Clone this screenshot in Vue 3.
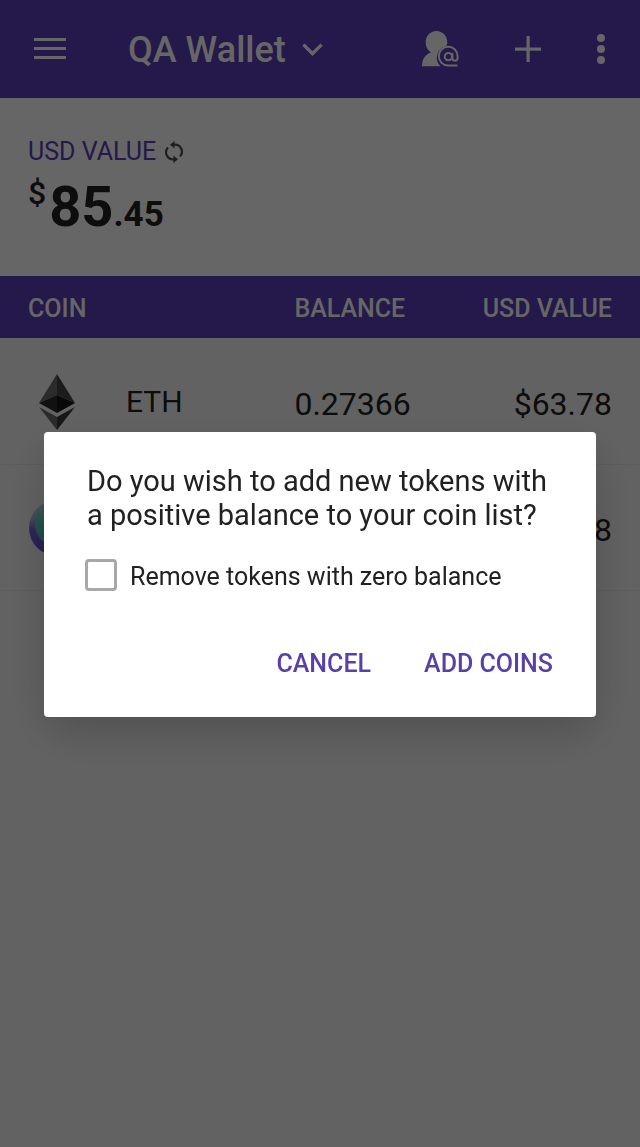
<template>
  <div class="wallet">
    <header class="topbar">
      <button class="icon-btn menu" type="button" aria-label="Menu">
        <svg width="32" height="22" viewBox="0 0 32 22" fill="currentColor">
          <rect y="0" width="32" height="3" />
          <rect y="9" width="32" height="3" />
          <rect y="18" width="32" height="3" />
        </svg>
      </button>
      <button class="icon-btn wallet-name" type="button">
        QA Wallet
        <svg width="21" height="14" viewBox="0 0 21 14" fill="none" stroke="currentColor" stroke-width="3.4">
          <path d="M1.4 1.6 10.500 10.700 19.600 1.600" />
        </svg>
      </button>
      <div class="actions">
        <button class="icon-btn" type="button" aria-label="Contacts">
          <svg width="38" height="38" viewBox="0 0 38 38" fill="none">
            <path fill="currentColor" d="M15.500 1C9.300 1 4.600 6 4.600 12.200c0 4.400 1.800 7.600 5.400 10.200C4.200 24.200 1 29 1 36.200h18.500A11.800 11.800 0 0 1 25 16.200C26 14.800 26.300 13.500 26.300 12.200 26.300 6 21.600 1 15.500 1z" />
            <g stroke="currentColor" stroke-width="2">
              <path d="M36.500 35.600h-9.300a9.400 9.400 0 1 1 9.400-9.400v1.800c0 3.600-5.200 3.600-5.200 0v-5" />
              <circle cx="27.400" cy="26.600" r="3.700" />
            </g>
          </svg>
        </button>
        <button class="icon-btn" type="button" aria-label="Add coin">
          <svg width="26" height="26" viewBox="0 0 26 26" fill="currentColor">
            <rect x="11.500" width="3.200" height="26" />
            <rect y="11.500" width="26" height="3.200" />
          </svg>
        </button>
        <button class="icon-btn" type="button" aria-label="More">
          <svg width="8" height="30" viewBox="0 0 8 30" fill="currentColor">
            <circle cx="4" cy="4" r="4" />
            <circle cx="4" cy="15" r="4" />
            <circle cx="4" cy="26" r="4" />
          </svg>
        </button>
      </div>
    </header>

    <section class="summary">
      <div class="summary-label">
        USD VALUE
        <svg width="18" height="22" viewBox="0 0 18 22" fill="none" stroke="#4c4c4c" stroke-width="2.2">
          <path d="M8 3.700h1.500a7 7 0 0 1 5.500 11.800" />
          <path d="M10 18.300H8.500a7 7 0 0 1-5.500-11.800" />
          <path fill="#4c4c4c" stroke="none" d="M9.500 0v7.400L5 3.700zM8.500 22v-7.400l4.500 3.700z" />
        </svg>
      </div>
      <div class="amount">
        <span class="currency">$</span><span class="whole">85</span><span class="cents">.45</span>
      </div>
    </section>

    <table class="coins">
      <thead>
        <tr>
          <th class="col-coin">COIN</th>
          <th class="col-balance">BALANCE</th>
          <th class="col-value">USD VALUE</th>
        </tr>
      </thead>
      <tbody>
        <tr v-for="coin in coins" :key="coin.id">
          <td>
            <div class="coin">
              <span class="coin-icon">
                <svg v-if="coin.id === 'eth'" width="36" height="56" viewBox="0 0 36 56">
                  <path fill="#6c6c6c" d="M18 0 0 29l18-8z" />
                  <path fill="#484848" d="M18 0l18 29-18-8z" />
                  <path fill="#2c2c2c" d="M18 21 0 29l18 10z" />
                  <path fill="#141414" d="M18 21l18 8-18 10z" />
                  <path fill="#6c6c6c" d="M0 33l18 23V43z" />
                  <path fill="#3c3c3c" d="M36 33 18 56V43z" />
                </svg>
                <svg v-else width="56" height="56" viewBox="0 0 56 56">
                  <defs>
                    <linearGradient id="ring" x1="0" y1="0" x2="0" y2="1">
                      <stop offset="0.100" stop-color="#a8d8d8" />
                      <stop offset="0.350" stop-color="#a8b8d8" />
                      <stop offset="0.550" stop-color="#7060d8" />
                      <stop offset="1" stop-color="#6450e0" />
                    </linearGradient>
                    <linearGradient id="core" x1="0" y1="0" x2="0" y2="1">
                      <stop offset="0.100" stop-color="#a0dcd4" />
                      <stop offset="0.500" stop-color="#58d0c8" />
                      <stop offset="1" stop-color="#48b8c0" />
                    </linearGradient>
                  </defs>
                  <circle cx="28" cy="28" r="28" fill="url(#ring)" />
                  <circle cx="29" cy="24" r="23" fill="url(#core)" />
                </svg>
              </span>
              {{ coin.name }}
            </div>
          </td>
          <td class="number">{{ coin.balance }}</td>
          <td class="number col-value">{{ coin.value }}</td>
        </tr>
      </tbody>
    </table>

    <div v-if="showDialog" class="overlay">
      <div class="dialog" role="dialog" aria-labelledby="dialog-text">
        <p id="dialog-text" class="question">Do you wish to add new tokens with a positive balance to your coin list?</p>
        <div class="option">
          <input id="removeZero" v-model="removeZero" type="checkbox">
          <label for="removeZero">Remove tokens with zero balance</label>
        </div>
        <div class="buttons">
          <button type="button" @click="closeDialog">CANCEL</button>
          <button type="button" @click="closeDialog">ADD COINS</button>
        </div>
      </div>
    </div>
  </div>
</template>

<script setup>
import { ref } from 'vue';

const showDialog = ref(true)
const removeZero = ref(false)
const coins = ref([
  { id: 'eth', name: 'ETH', balance: '0.27366', value: '$63.78' },
  { id: 'token', name: '', balance: '', value: '8' }
])

function closeDialog(){
  showDialog.value = false
}
</script>

<style>
body {
  margin: 0;
  background: #f6f6f6;
}
</style>

<style scoped>
.wallet {
  min-height: 100vh;
  background: #f6f6f6;
  color: #212121;
  font-family: Roboto, "Liberation Sans", sans-serif;
}

.topbar {
  display: flex;
  align-items: center;
  height: 98px;
  padding: 0 35px 0 34px;
  box-sizing: border-box;
  background: #5c3cb8;
  color: #fff;
}

.icon-btn {
  display: flex;
  align-items: center;
  padding: 0;
  border: 0;
  background: none;
  color: inherit;
  font: inherit;
}

.wallet-name {
  gap: 16px;
  margin-left: 62px;
  padding-top: 2px;
  font-size: 36px;
  font-weight: 500;
}

.actions {
  display: flex;
  align-items: center;
  gap: 56px;
  margin-left: auto;
}

.summary {
  height: 178px;
  padding: 38px 28px 0;
  box-sizing: border-box;
  background: #fff;
}

.summary-label {
  display: flex;
  align-items: center;
  gap: 9px;
  color: #5c3cb8;
  font-size: 25px;
  line-height: 32px;
}

.amount {
  display: flex;
  align-items: baseline;
  font-weight: 700;
  line-height: 78px;
}

.currency {
  align-self: flex-start;
  margin-right: 3px;
  font-size: 32px;
  font-weight: 500;
  line-height: 50px;
}

.whole {
  font-size: 56px;
}

.cents {
  font-size: 35px;
}

.coins {
  width: 100%;
  border-collapse: collapse;
  table-layout: fixed;
}

.coins th {
  height: 62px;
  padding: 2px 0 0;
  box-sizing: border-box;
  background: #5c3cb8;
  color: #fff;
  font-size: 25px;
  font-weight: 500;
  text-align: left;
}

.coins td {
  height: 126px;
  padding: 2px 0 0;
  box-sizing: border-box;
  border-bottom: 1px solid #e8e8e8;
  font-size: 30px;
}

.coins .number {
  padding-top: 6px;
  font-size: 32px;
}

.coins .col-coin {
  width: 46%;
  padding-left: 28px;
}

.coins .col-value {
  padding-right: 28px;
  text-align: right;
}

.coin {
  display: flex;
  align-items: center;
  padding-left: 28px;
}

.coin-icon {
  display: flex;
  justify-content: center;
  width: 58px;
  margin-right: 40px;
}

.overlay {
  position: fixed;
  inset: 0;
  display: flex;
  align-items: center;
  justify-content: center;
  padding: 2px 44px 0;
  background: rgba(0, 0, 0, 0.6);
}

.dialog {
  width: 100%;
  padding: 32px 43px;
  box-sizing: border-box;
  border-radius: 4px;
  background: #fff;
  box-shadow: 0 16px 48px rgba(0, 0, 0, 0.2);
}

.question {
  margin: 0;
  font-size: 29px;
  line-height: 34px;
}

.option {
  display: flex;
  align-items: center;
  gap: 13px;
  margin: 25px 0 50px -2px;
  font-size: 25px;
  line-height: 32px;
}

.option label {
  padding-top: 4px;
}

.option input {
  appearance: none;
  width: 32px;
  height: 32px;
  margin: 0;
  border: 3px solid #a8a8a8;
  border-radius: 4px;
  background: #fff;
}

.option input:checked {
  border-color: #5c3cb8;
  background: #5c3cb8;
}

.buttons {
  display: flex;
  justify-content: flex-end;
  gap: 53px;
}

.buttons button {
  padding: 0;
  border: 0;
  background: none;
  color: #5a3fa8;
  font-family: inherit;
  font-size: 25px;
  font-weight: 500;
  line-height: 42px;
}
</style>
